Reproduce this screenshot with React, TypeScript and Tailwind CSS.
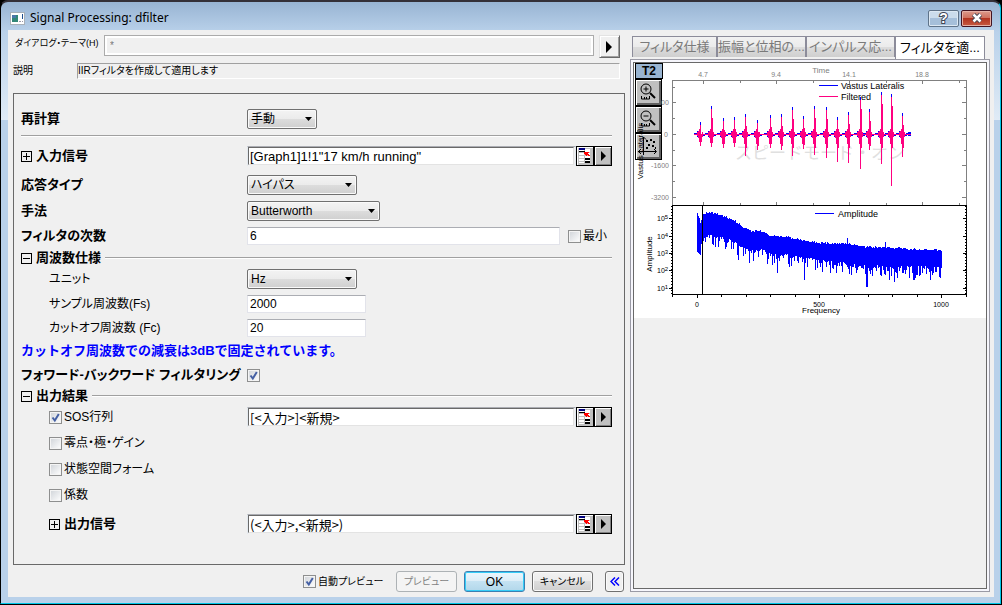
import { useState } from 'react';
import type { ReactNode } from 'react';

const spikes = [
  [700, 122, 146], [711, 106, 147], [723, 118, 148], [734, 117, 147], [745, 114, 156],
  [757, 120, 150], [770, 115, 148], [781, 114, 150], [792, 107, 156], [803, 116, 149],
  [814, 106, 155], [826, 107, 158], [837, 117, 162], [848, 112, 163], [860, 97, 169],
  [869, 109, 150], [881, 92, 164], [891, 94, 186], [902, 113, 157],
];

// Envelope of the spectrum: x, upper edge, lower edge
const envelope = [
  [697, 213, 242], [700, 222, 246], [703, 214, 238], [708, 212, 234], [718, 214, 237],
  [728, 218, 238], [735, 221, 242], [743, 227, 247], [751, 231, 250], [761, 231, 249],
  [771, 236, 253], [788, 237, 254], [801, 240, 256], [820, 243, 260], [848, 244, 263],
  [868, 247, 265], [895, 248, 266], [911, 249, 266], [941, 250, 267],
];

const dips: Record<number, number> = {
  697: 252, 700: 255, 738: 260, 749: 263, 767: 264, 777: 273, 789: 267, 804: 280, 815: 270,
  822: 272, 830: 273, 866: 287, 867: 287, 872: 276, 889: 280, 894: 282, 903: 273, 913: 280,
  914: 280, 919: 276, 930: 280, 939: 277,
};

const peaks: Record<number, number> = { 847: 238, 885: 242 };

const noise = (n: number) => {
  const v = Math.sin(n * 12.9898) * 43758.5453;
  return v - Math.floor(v);
};

function spectrumPath() {
  let d = '';
  for (let x = 697; x <= 941; x++) {
    const next = Math.max(1, envelope.findIndex((p) => p[0] >= x));
    const a = envelope[next - 1];
    const b = envelope[next];
    const t = (x - a[0]) / (b[0] - a[0]);
    const top = peaks[x] ?? Math.round(a[1] + (b[1] - a[1]) * t + noise(x) * 2 - 1);
    const low = Math.round(a[2] + (b[2] - a[2]) * t + noise(x + 500) ** 2 * 12);
    d += `M${x} ${top}V${dips[x] ?? low}`;
  }
  return d;
}

const rawPath = spikes
  .map(([x, t, b]) => `M${x - 6} 133.5h3M${x + 3} 135.5h2M${x}.5 ${t}V${b - 3}M${x - 1}.5 129V142M${x - 3}.5 131V137`)
  .join('');

const filteredPath = spikes
  .map(([x, t, b]) => `M${x}.5 ${t + 3}V${b}M${x + 1}.5 ${t + 12}V${Math.min(b - 4, 148)}M${x - 1}.5 129V${Math.min(b - 4, 144)}M${x - 2}.5 131V138M${x - 3}.5 132V136M${x + 2}.5 132V137`)
  .join('');

function Graph() {
  return (
    <svg viewBox="634 63 352 255" className="pointer-events-none relative block w-full" role="img" aria-label="プレビュー">
      <path
        d="M672.5 205V80.5H966.5V205M703.5 81v3M776.5 81v3M849.5 81v3M922.5 81v3M740.5 81v2M813.5 81v2M886.5 81v2M959.5 81v2M673 102.5h3M673 134.5h3M673 165.5h3M673 197.5h3M673 87.5h2M673 118.5h2M673 150.5h2M673 181.5h2M966 102.5h-4M966 134.5h-4M966 165.5h-4M966 197.5h-4M966 87.5h-2M966 118.5h-2M966 150.5h-2M966 181.5h-2M703.5 205v-3M776.5 205v-3M849.5 205v-3M922.5 205v-3M740.5 205v-2M813.5 205v-2M886.5 205v-2M959.5 205v-2"
        fill="none"
        stroke="#808080"
        shapeRendering="crispEdges"
      />
      <g fontFamily="'Liberation Sans', sans-serif" fontSize="7" fill="#808080" textAnchor="middle">
        <text x="703" y="77">4.7</text>
        <text x="776" y="77">9.4</text>
        <text x="849" y="77">14.1</text>
        <text x="922" y="77">18.8</text>
        <text x="821" y="73" fontSize="8">Time</text>
        <text x="665" y="105">00</text>
        <text x="666" y="137">0</text>
        <text x="660" y="168">-1600</text>
        <text x="660" y="200">-3200</text>
      </g>
      <text x="735" y="159" fontSize="17" fill="#e0e0e0" fontFamily="'Noto Sans CJK JP', sans-serif" className="[font-feature-settings:normal]">
        スピードモード・オン
      </text>
      <g shapeRendering="crispEdges" fill="none">
        <path d={rawPath + 'M906 133.5h5M908 132.5h3M908 135.5h3'} stroke="#0000ff" />
        <path d={filteredPath + 'M694 134.5H911'} stroke="#ff0080" />
        <path d="M819 85.5h19" stroke="#0000ff" />
        <path d="M819 96.5h19" stroke="#ff0080" />
        <path d={spectrumPath()} transform="translate(.5 0)" stroke="#0000ff" />
        <path d="M815 213.5h19" stroke="#0000ff" />
        <path
          d="M672.5 205.5H966.5V294.5H672.5zM702.5 205V294M697.5 295v3M819.5 295v3M941.5 295v3M721.5 295v2M746.5 295v2M770.5 295v2M795.5 295v2M844.5 295v2M868.5 295v2M892.5 295v2M917.5 295v2M672.5 295v2M966.5 295v2"
          stroke="#000"
        />
        <path
          d="M669 218.5h3M669 236.5h3M669 253.5h3M669 270.5h3M669 288.5h3M963 218.5h3M963 236.5h3M963 253.5h3M963 270.5h3M963 288.5h3"
          stroke="#000"
        />
        <path d="M671.5 206V294M965.5 206V294" stroke="#000" strokeDasharray="1 2" />
      </g>
      <g fontFamily="'Liberation Sans', sans-serif" fontSize="9" fill="#000">
        <text x="841" y="89">Vastus Lateralis</text>
        <text x="841" y="100">Filtered</text>
        <text x="838" y="217">Amplitude</text>
        <g fontSize="8" textAnchor="middle">
          <text x="821" y="313">Frequency</text>
          <text transform="translate(652 254) rotate(-90)">Amplitude</text>
          <text transform="translate(643 151) rotate(-90)">Vastus Lateralis</text>
        </g>
        <g fontSize="7" textAnchor="middle">
          <text x="697" y="307">0</text>
          <text x="819" y="307">500</text>
          <text x="941" y="307">1000</text>
        </g>
        {[218, 236, 253, 270, 288].map((y, i) => (
          <text key={y} x="657" y={y + 3} fontSize="7">
            10<tspan dy="-2" fontSize="6">{5 - i}</tspan>
          </text>
        ))}
      </g>
    </svg>
  );
}

function CheckBox({ id, label, checked = false }: { id: string; label: ReactNode; checked?: boolean }) {
  return (
    <div className="flex items-center gap-0.5">
      <span className="relative block size-[13px] shrink-0">
        <input
          id={id}
          type="checkbox"
          defaultChecked={checked}
          className="peer block size-[13px] appearance-none border border-[#8e8f8f] bg-linear-to-br from-[#cfd3d8] to-white shadow-[inset_0_0_0_1px_#f4f4f4]"
        />
        <svg viewBox="0 0 13 13" className="pointer-events-none absolute inset-0 hidden peer-checked:block">
          <path d="M3.5 6.5 5.8 9.5 9.8 3" fill="none" stroke="#4560a4" strokeWidth="2" />
        </svg>
      </span>
      {label && <label htmlFor={id}>{label}</label>}
    </div>
  );
}

function Select({ id, options, className }: { id: string; options: string[]; className: string }) {
  return (
    <div className={`relative ${className}`}>
      <select
        id={id}
        className="block h-5 w-full appearance-none rounded-xs border border-[#707070] bg-[linear-gradient(to_bottom,#f3f3f3_0%,#ebebeb_50%,#dddddd_50%,#cfcfcf_100%)] pl-[3px] leading-4 shadow-[inset_0_0_0_1px_#fafafa]"
      >
        {options.map((option) => (
          <option key={option}>{option}</option>
        ))}
      </select>
      <svg viewBox="0 0 7 4" className="pointer-events-none absolute top-2 right-[5px] h-1 w-[7px]">
        <path d="M0 0h7L3.5 4z" />
      </svg>
    </div>
  );
}

function NumberField({ id, value, className }: { id: string; value: string; className: string }) {
  return (
    <input
      id={id}
      defaultValue={value}
      className={`h-[18px] min-w-0 border border-[#e2e3ea] border-t-[#abadb3] bg-white pl-0.5 leading-4 ${className}`}
    />
  );
}

function RangeField({ id, value, label, className = '' }: { id: string; value: string; label?: string; className?: string }) {
  return (
    <div className="flex h-5 w-full">
      <div className="min-w-0 flex-1 border-x border-t border-[#e3e9ef] border-t-[#abadb3] pr-px">
        <input
          id={id}
          aria-label={label}
          defaultValue={value}
          className={`block h-[18px] w-full border border-[#e3e3e3] border-t-[#696969] border-l-[#696969] bg-white pl-px text-[13px] leading-4 [font-feature-settings:normal] ${className}`}
        />
      </div>
      <button type="button" aria-label="範囲を選択" className="h-5 w-[18px] border border-black bg-[#c0c0c0] shadow-[inset_1px_1px_0_#fff]">
        <svg viewBox="0 0 16 18" className="block h-[18px] w-4" shapeRendering="crispEdges">
          <path d="M2 2h11v14H2z" fill="#fff" />
          <path d="M2 5h11v1H2zM2 8h11v1H2zM2 11h11v1H2zM2 14h11v1H2zM7 2h1v14H7z" fill="#c0c0c0" />
          <path d="M2 1h6v2H2z" fill="#000080" />
          <path d="M2 4h6v1H2z" />
          <path d="M7 5h5v1h-1v1h1v1h1v1h-2V8h-1v1H9V8H8V7H7z" fill="#f00" />
          <path d="M8 11h5v2H8zM8 14h5v2H8z" />
        </svg>
      </button>
      <button type="button" aria-label="メニュー" className="h-5 w-[18px] border border-black bg-[#c0c0c0] shadow-[inset_1px_1px_0_#fff,inset_-1px_-1px_0_#808080]">
        <svg viewBox="0 0 16 18" className="block h-[18px] w-4">
          <path d="M6 4v10l5-5z" />
        </svg>
      </button>
    </div>
  );
}

function Toggle({ open, label, onClick }: { open: boolean; label: string; onClick: () => void }) {
  return (
    <button type="button" aria-expanded={open} aria-label={label} onClick={onClick} className="size-[11px] shrink-0">
      <svg viewBox="0 0 11 11" fill="none" stroke="#000" shapeRendering="crispEdges" className="block size-[11px]">
        <path d={open ? 'M.5.5h10v10H.5zM2 5.5h7' : 'M.5.5h10v10H.5zM2 5.5h7M5.5 2v7'} />
      </svg>
    </button>
  );
}

function Row({ label, className = 'h-[26px]', children }: { label: ReactNode; className?: string; children?: ReactNode }) {
  return (
    <div className={`grid grid-cols-[226px_1fr] items-center ${className}`}>
      {label}
      <div className="flex min-w-0 items-center">{children}</div>
    </div>
  );
}

function GroupHeader({ label, open, onClick, className }: { label: string; open: boolean; onClick: () => void; className: string }) {
  return (
    <div className={`flex items-center ${className}`}>
      <Toggle open={open} label={label} onClick={onClick} />
      <span className="mx-1 text-[13px] font-bold">{label}</span>
      <div className="h-0.5 flex-1 border-t border-b border-t-[#a0a0a0] border-b-white" />
    </div>
  );
}

const tabs = ['フィルタ仕様', '振幅と位相の...', 'インパルス応...', 'フィルタを適...'];

function PreviewPanel() {
  const [active, setActive] = useState(3);

  return (
    <section className="flex w-[360px] shrink-0 flex-col">
      <div role="tablist" className="ml-0.5 grid h-6 grid-cols-[85px_89px_89px_90px] pt-px">
        {tabs.map((tab, i) => (
          <button
            key={tab}
            type="button"
            role="tab"
            aria-selected={i === active}
            onClick={() => setActive(i)}
            className={`border border-b-0 border-[#8c8c9a] text-[13px] whitespace-nowrap ${
              i === active ? 'bg-white text-black' : 'mb-0.5 bg-[linear-gradient(to_bottom,#f2f2f2_0%,#ebebeb_50%,#dddddd_50%,#cfcfcf_100%)] text-[#7a7a7a]'
            }`}
          >
            {tab}
          </button>
        ))}
      </div>
      <div className="flex flex-1 border border-[#9a9aa5] bg-[#f6f6fc] p-0.5">
        <div className="flex-1 border border-[#696969] bg-[#f0f0f0]">
          <div className="relative bg-white">
            <div className="absolute top-0 left-px flex w-7 flex-col">
              <button type="button" className="h-4 border border-black bg-[#99b4d1] text-[12px] leading-3 font-bold">
                T2
              </button>
              <ToolButton label="拡大">
                <circle cx="10" cy="9" r="5" />
                <path d="M7.5 9h5M10 6.5v5M5.5 16v3h8v-3M8.5 17v2M10.5 17v2" />
                <path d="m14 13 5 5" strokeWidth="2" />
              </ToolButton>
              <ToolButton label="縮小">
                <circle cx="10" cy="9" r="5" />
                <path d="M7.5 9h5M5.5 16v3h8v-3M8.5 17v2M10.5 17v2" />
                <path d="m14 13 5 5" strokeWidth="2" />
              </ToolButton>
              <ToolButton label="再スケール">
                <path d="M7.5 3v18M2 17.5h18M5 5.5 7.5 3 10 5.5M18 15l2.5 2.5L18 20M5 15l-2.5 2.5L5 20" />
                <path d="M10 7h2M14 6h2M17 8h2M12 11h2M16 12h2M19 14h1M10 14h2" strokeWidth="2" />
              </ToolButton>
            </div>
            <Graph />
          </div>
        </div>
      </div>
    </section>
  );
}

function ToolButton({ label, children }: { label: string; children: ReactNode }) {
  return (
    <button type="button" aria-label={label} className="h-[27px] w-[27px] border border-black bg-[#c0c0c0] shadow-[inset_1px_1px_0_#fff,inset_-2px_-2px_0_#606060]">
      <svg viewBox="0 0 25 25" fill="none" stroke="#000" className="block size-[25px]">
        {children}
      </svg>
    </button>
  );
}

export default function App() {
  const [freqOpen, setFreqOpen] = useState(true);
  const [outputOpen, setOutputOpen] = useState(true);
  const [inputOpen, setInputOpen] = useState(false);
  const [signalOpen, setSignalOpen] = useState(false);

  return (
    <div className="bg-black pr-px pb-px">
      <div className="flex min-h-[calc(100vh-1px)] flex-col rounded-t-lg border-t-2 border-r border-b border-l border-t-[#343038] border-r-[#00c8e8] border-b-[#00c8e8] border-l-black bg-[linear-gradient(to_bottom,#98b4d3_0,#b9d1ea_30px,#e0ebf6_118px,#b9d1ea_118px)] pr-1.5 pb-1.5 pl-[7px] font-['Liberation_Sans','Noto_Sans_CJK_JP',sans-serif] text-[12px] leading-4 text-black [font-feature-settings:'palt']">
        <header className="flex h-7 items-center pt-1">
          <svg viewBox="0 0 15 13" className="mr-[5px] ml-0.5 h-[13px] w-[15px]" shapeRendering="crispEdges">
            <path d="M0 0h15v13H0z" fill="#a8b0b8" />
            <path d="M1 1h13v11H1z" fill="#fff" />
            <path d="M2 3h6v7H2z" fill="#328778" />
            <path d="M2 3h4v3H2z" fill="#4a78a8" />
            <path d="M12 2h1v5h-1z" fill="#1f4f8f" />
            <path d="M9 9h2v1H9zM12 9h1v1h-1z" fill="#9999aa" />
          </svg>
          <h1 className="flex-1 font-['Noto_Sans',sans-serif] text-[12px]">Signal Processing: dfilter</h1>
          <button type="button" aria-label="ヘルプ" className="mr-0.5 flex h-[17px] w-[31px] items-center justify-center rounded-xs border border-[#5f7389] bg-[linear-gradient(to_bottom,#cbdcec_50%,#a5bfda_50%)] text-[14px] leading-4 font-bold text-white shadow-[inset_0_0_0_1px_#dce8f3] [-webkit-text-stroke:2px_#3f4654] [paint-order:stroke_fill]">
            ?
          </button>
          <button type="button" aria-label="閉じる" className="mr-0.5 flex h-[17px] w-[31px] items-center justify-center rounded-xs border border-[#431422] bg-[linear-gradient(to_bottom,#dc9a8c_0%,#cf6f5c_48%,#b23420_50%,#c75b43_100%)] shadow-[inset_0_0_0_1px_#e5b0a5]">
            <svg viewBox="0 0 12 10" className="h-2.5 w-3">
              <path d="m2.5 1.5 7 7M9.5 1.5l-7 7" stroke="#454654" strokeWidth="4.5" />
              <path d="m2.5 1.5 7 7M9.5 1.5l-7 7" stroke="#fff" strokeWidth="2.5" />
            </svg>
          </button>
        </header>

        <main className="flex flex-1 bg-[#f0f0f0] pt-[5px] pr-1 pb-[5px]">
          <div className="mr-[5px] flex min-w-0 flex-1 flex-col pl-[5px]">
            <div className="flex h-6 items-start">
              <label htmlFor="theme" className="w-[91px] pl-0.5 text-[9px] whitespace-nowrap">
                ダイアログ・テーマ(H)
              </label>
              <input
                id="theme"
                defaultValue="*"
                className="h-[21px] min-w-0 flex-1 border border-[#ababab] bg-[#f0f0f0] pl-[5px] text-[10px] text-[#777] shadow-[inset_0_0_0_2px_#fff]"
              />
              <button type="button" aria-label="テーマのメニュー" className="mx-[5px] flex h-[23px] w-[21px] items-center justify-center border border-[#e3e3e3] border-r-[#696969] border-b-[#696969] shadow-[inset_1px_1px_0_#fff,inset_-1px_-1px_0_#a0a0a0]">
                <svg viewBox="0 0 7 12" className="h-3 w-[7px]">
                  <path d="M0 0v12l6-6z" />
                </svg>
              </button>
            </div>
            <div className="mt-1 mb-3.5 flex h-4 items-center">
              <label htmlFor="description" className="w-16 text-[10px]">
                説明
              </label>
              <input
                id="description"
                readOnly
                value="IIRフィルタを作成して適用します"
                className="mr-[5px] h-4 min-w-0 flex-1 border border-white border-t-[#a0a0a0] border-l-[#a0a0a0] bg-[#f0f0f0] text-[10px]"
              />
            </div>

            <form className="flex flex-1 flex-col border border-[#696969] pt-3 pr-3 pb-4 pl-[7px]">
              <Row label={<label htmlFor="recalc" className="text-[13px] font-bold">再計算</label>}>
                <Select id="recalc" options={['手動', '自動', 'なし']} className="w-[70px]" />
              </Row>
              <div className="mt-[3px] mb-1.5 h-0.5 border-t border-b border-t-[#a0a0a0] border-b-white" />
              <Row
                label={
                  <div className="flex items-center gap-1 text-[13px] font-bold">
                    <Toggle open={inputOpen} label="入力信号" onClick={() => setInputOpen(!inputOpen)} />
                    <label htmlFor="input">入力信号</label>
                  </div>
                }
              >
                <RangeField id="input" value={'[Graph1]1!1"17 km/h running"'} />
              </Row>
              <Row className="mt-[3px] h-[26px]" label={<label htmlFor="response" className="text-[13px] font-bold">応答タイプ</label>}>
                <Select id="response" options={['ハイパス', 'ローパス', 'バンドパス']} className="w-[110px]" />
              </Row>
              <Row label={<label htmlFor="method" className="text-[13px] font-bold">手法</label>}>
                <Select id="method" options={['Butterworth', 'Chebyshev Type I', 'Elliptic']} className="w-[133px]" />
              </Row>
              <Row className="h-6" label={<label htmlFor="order" className="text-[13px] font-bold">フィルタの次数</label>}>
                <NumberField id="order" value="6" className="mr-2 flex-1" />
                <div className="w-11">
                  <CheckBox id="minimum" label="最小" />
                </div>
              </Row>

              <GroupHeader label="周波数仕様" open={freqOpen} onClick={() => setFreqOpen(!freqOpen)} className="h-5" />
              {freqOpen && (
                <>
                  <Row className="mb-0.5 h-[22px]" label={<label htmlFor="unit" className="pl-7">ユニット</label>}>
                    <Select id="unit" options={['Hz', 'kHz']} className="w-[110px]" />
                  </Row>
                  <Row className="h-6" label={<label htmlFor="fs" className="pl-7">サンプル周波数(Fs)</label>}>
                    <NumberField id="fs" value="2000" className="w-[119px]" />
                  </Row>
                  <Row className="h-6" label={<label htmlFor="fc" className="pl-7">カットオフ周波数 (Fc)</label>}>
                    <NumberField id="fc" value="20" className="w-[119px]" />
                  </Row>
                </>
              )}
              <p className="flex h-[22px] items-center text-[13px] font-bold whitespace-nowrap text-[#0000ff] [font-feature-settings:normal]">
                カットオフ周波数での減衰は3dBで固定されています。
              </p>
              <Row label={<label htmlFor="forward" className="text-[13px] font-bold whitespace-nowrap">フォワード-バックワード フィルタリング</label>}>
                <CheckBox id="forward" label="" checked />
              </Row>

              <GroupHeader label="出力結果" open={outputOpen} onClick={() => setOutputOpen(!outputOpen)} className="h-4" />
              {outputOpen && (
                <>
                  <Row label={<div className="pl-7"><CheckBox id="sos" label="SOS行列" checked /></div>}>
                    <RangeField id="sos-range" label="SOS行列の出力先" value="[<入力>]<新規>" className="font-['Noto_Sans_CJK_JP',sans-serif]" />
                  </Row>
                  <Row label={<div className="pl-7"><CheckBox id="zpk" label="零点・極・ゲイン" /></div>} />
                  <Row label={<div className="pl-7"><CheckBox id="state" label="状態空間フォーム" /></div>} />
                  <Row label={<div className="pl-7"><CheckBox id="coef" label="係数" /></div>} />
                  <Row
                    className="h-8"
                    label={
                      <div className="flex items-center gap-1 pl-7 text-[13px] font-bold">
                        <Toggle open={signalOpen} label="出力信号" onClick={() => setSignalOpen(!signalOpen)} />
                        <label htmlFor="output">出力信号</label>
                      </div>
                    }
                  >
                    <RangeField id="output" value="(<入力>,<新規>)" className="font-['Noto_Sans_CJK_JP',sans-serif]" />
                  </Row>
                </>
              )}
            </form>

            <footer className="mt-1.5 flex items-center justify-end gap-[7px] text-[10px]">
              <div className="w-[86px] whitespace-nowrap">
                <CheckBox id="auto" label="自動プレビュー" checked />
              </div>
              <button type="button" disabled className="h-[21px] w-[61px] rounded-[3px] border border-[#adb2b5] bg-[#f4f4f4] text-[#838383]">
                プレビュー
              </button>
              <button type="button" className="h-[21px] w-[61px] rounded-[3px] border border-[#3c7fb1] bg-[linear-gradient(to_bottom,#eaf6fd_0%,#dcedf7_50%,#c4e2f2_50%,#b2d7ea_100%)] text-[12px] shadow-[inset_0_0_0_1px_#35cdf8]">
                OK
              </button>
              <button type="button" className="h-[21px] w-[61px] rounded-[3px] border border-[#707070] bg-[linear-gradient(to_bottom,#f2f2f2_0%,#ebebeb_50%,#dddddd_50%,#cfcfcf_100%)] shadow-[inset_0_0_0_1px_#fafafa]">
                キャンセル
              </button>
              <button type="button" aria-label="プレビューを閉じる" className="mr-px ml-[5px] flex h-[21px] w-[19px] items-center justify-center rounded-[3px] border border-[#707070] bg-[#f0f0f0] shadow-[inset_0_0_0_1px_#fafafa]">
                <svg viewBox="0 0 10 9" className="h-[9px] w-2.5" fill="none" stroke="#0000ff" strokeWidth="1.5">
                  <path d="M5 .5 1 4.5l4 4M9 .5 5 4.5l4 4" />
                </svg>
              </button>
            </footer>
          </div>

          <PreviewPanel />
        </main>
      </div>
    </div>
  );
}
